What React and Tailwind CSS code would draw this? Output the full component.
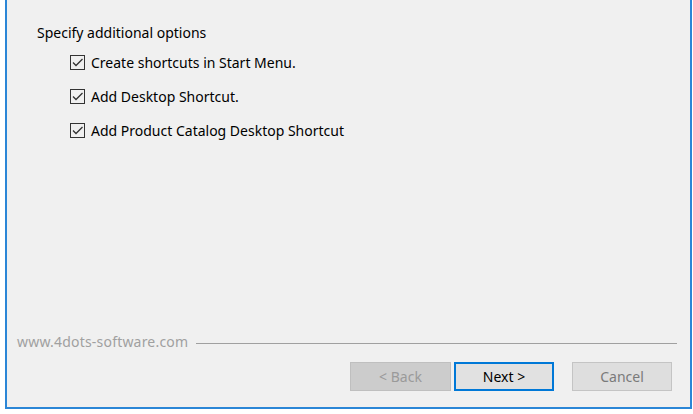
import React from "react";

// Checkbox row
const Option = ({ label }) => (
  <div className="flex items-center h-[20px]">
    <span className="w-[15px] h-[15px] border border-[#333333] bg-[#f0f0f0] flex items-center justify-center">
      <svg width="13" height="13" viewBox="0 0 13 13">
        <path d="M2 6.5 L5 9.5 L11.5 3" fill="none" stroke="#333333" strokeWidth="1.3" />
      </svg>
    </span>
    <span className="ml-[6px] text-[14px] text-black">{label}</span>
  </div>
);

export default function App() {
  return (
    <div
      className="w-[693px] h-[414px] bg-white"
      style={{ fontFamily: '"Segoe UI", "Noto Sans", sans-serif' }}
    >
      <div className="ml-[5px] w-[687px] h-[409px] bg-[#f0f0f0] border-x-2 border-b-2 border-[#2b86d6] flex flex-col">
        {/* Options */}
        <div className="pl-[30px] pt-[23px] text-[14px] leading-[20px] text-black">
          Specify additional options
        </div>
        <div className="pl-[63px] pt-[9px] flex flex-col gap-[14px]">
          <Option label="Create shortcuts in Start Menu." />
          <Option label="Add Desktop Shortcut." />
          <Option label="Add Product Catalog Desktop Shortcut" />
        </div>

        <div className="flex-1" />

        {/* Footer */}
        <div className="flex items-center pl-[10px] pr-[13px]">
          <span className="text-[14px] tracking-[0.2px] leading-[20px] text-[#a0a0a0]">www.4dots-software.com</span>
          <span className="flex-1 ml-[8px] h-0 border-t border-[#a0a0a0] mt-[2px]" />
        </div>
        <div className="flex justify-end pr-[18px] pt-[10px] pb-[16px] gap-[3px]">
          <button className="w-[101px] h-[29px] bg-[#cccccc] border border-[#bfbfbf] text-[14px] text-[#9a9a9a]">
            &lt; Back
          </button>
          <button className="w-[100px] h-[29px] bg-[#e1e1e1] border-2 border-[#0078d7] text-[14px] text-black">
            Next &gt;
          </button>
          <button className="ml-[15px] w-[100px] h-[29px] bg-[#dedede] border border-[#c4c4c4] text-[14px] text-[#7a7a7a]">
            Cancel
          </button>
        </div>
      </div>
    </div>
  );
}
